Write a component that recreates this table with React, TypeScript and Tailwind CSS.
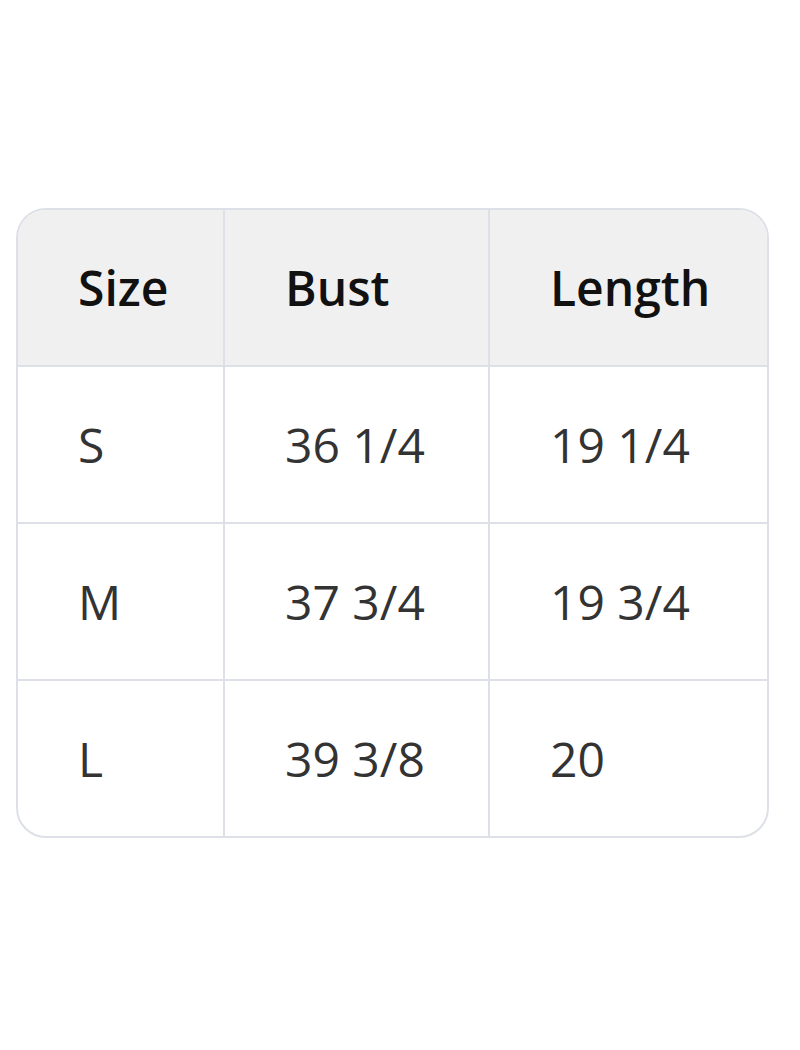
const rows = [
  ['S', '36 1/4', '19 1/4'],
  ['M', '37 3/4', '19 3/4'],
  ['L', '39 3/8', '20'],
]

export default function App() {
  return (
    <div className="w-[800px] h-[1050px] bg-white pt-[208px] pl-[16px] font-['Open_Sans','Liberation_Sans',sans-serif]">
      <div className="w-[753px] border-2 border-[#dde1e7] rounded-[30px] overflow-hidden">
        <div className="grid grid-cols-[207px_265px_1fr] bg-[#f0f0f0] border-b-2 border-[#dde1e7]">
          {['Size', 'Bust', 'Length'].map((h, i) => (
            <div
              key={h}
              className={`h-[155px] flex items-center pl-[60px] text-[48px] font-semibold text-[#111] ${i < 2 ? 'border-r-2 border-[#dde1e7]' : ''}`}
            >
              {h}
            </div>
          ))}
        </div>
        {rows.map((r, ri) => (
          <div
            key={ri}
            className={`grid grid-cols-[207px_265px_1fr] ${ri < rows.length - 1 ? 'border-b-2 border-[#dde1e7]' : ''}`}
          >
            {r.map((c, i) => (
              <div
                key={i}
                className={`h-[155px] flex items-center pl-[60px] text-[48px] text-[#333] ${i < 2 ? 'border-r-2 border-[#dde1e7]' : ''}`}
              >
                {c}
              </div>
            ))}
          </div>
        ))}
      </div>
    </div>
  )
}
